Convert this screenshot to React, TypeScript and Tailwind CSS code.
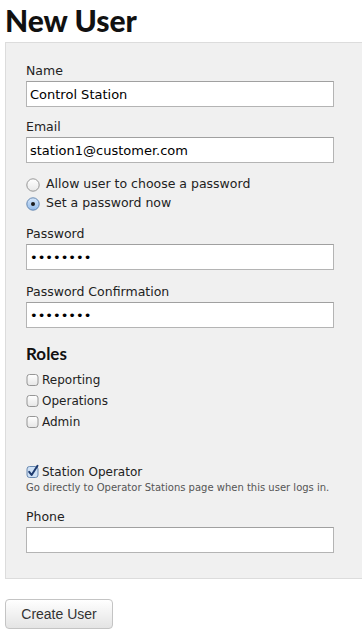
import React from 'react';

const body = { fontFamily: '"DejaVu Sans", sans-serif' };

const Field = ({ label, value, type = 'text', className = '' }: { label: string; value: string; type?: string; className?: string }) => (
  <div className={className}>
    <label className="block text-[12.5px] leading-4 text-[#222]">{label}</label>
    <input
      type={type}
      readOnly
      value={value}
      className="mt-[2px] block h-[26px] w-[308px] border border-[#b4b4b4] border-t-[#a0a0a0] bg-white px-[3px] text-[13px] text-black outline-none"
    />
  </div>
);

const Radio = ({ checked }: { checked?: boolean }) => (
  <svg width="14" height="14" viewBox="0 0 14 14" className="shrink-0">
    <defs>
      <linearGradient id={checked ? 'rOn' : 'rOff'} x1="0" y1="0" x2="0" y2="1">
        <stop offset="0" stopColor={checked ? '#d8e8fa' : '#ffffff'} />
        <stop offset="1" stopColor={checked ? '#8fb8e8' : '#e8e8e8'} />
      </linearGradient>
    </defs>
    <circle cx="7" cy="7" r="6.2" fill={`url(#${checked ? 'rOn' : 'rOff'})`} stroke={checked ? '#5a7eaa' : '#8c8c8c'} strokeWidth="0.9" />
    {checked && <circle cx="7" cy="7" r="2" fill="#1a1a1a" />}
  </svg>
);

const Check = ({ checked }: { checked?: boolean }) => (
  <svg width="13" height="13" viewBox="0 0 13 13" className="shrink-0 overflow-visible">
    <defs>
      <linearGradient id="cb" x1="0" y1="0" x2="0" y2="1">
        <stop offset="0" stopColor="#ffffff" />
        <stop offset="1" stopColor="#e6e6e6" />
      </linearGradient>
    </defs>
    <rect x="1" y="1.5" width="11" height="11" rx="2.5" fill={checked ? '#cfe1f5' : 'url(#cb)'} stroke={checked ? '#5b7ea8' : '#8a8a8a'} strokeWidth="0.9" />
    {checked && <path d="M3.2 6.8 L5.6 10 L11.5 0.8" fill="none" stroke="#1d3a6e" strokeWidth="2" strokeLinecap="round" strokeLinejoin="round" />}
  </svg>
);

export default function App() {
  return (
    <div className="min-h-[638px] bg-white pl-[5px]" style={body}>
      <h1 className="text-[30px] font-black leading-10 text-[#111]" style={{ fontFamily: 'Lato, sans-serif' }}>
        New User
      </h1>
      <div className="mt-[2px] border border-r-0 border-[#dcdcdc] bg-[#f0f0f0] px-5 pb-[25px] pt-5">
        <Field label="Name" value="Control Station" />
        <Field label="Email" value="station1@customer.com" className="mt-3" />

        <div className="mt-3 text-[12.5px] text-[#222]">
          <div className="flex h-[19px] items-center gap-[6px]">
            <Radio />
            <span>Allow user to choose a password</span>
          </div>
          <div className="flex h-[19px] items-center gap-[6px]">
            <Radio checked />
            <span>Set a password now</span>
          </div>
        </div>

        <Field label="Password" value="password" type="password" className="mt-[13px]" />
        <Field label="Password Confirmation" value="password" type="password" className="mt-[14px]" />

        <h2 className="mt-4 text-[17px] font-bold leading-5 text-[#111]" style={{ fontFamily: 'Lato, sans-serif' }}>
          Roles
        </h2>
        <div className="mt-[5px] text-[12px] text-[#222]">
          {['Reporting', 'Operations', 'Admin'].map((r) => (
            <div key={r} className="flex h-[21px] items-center gap-[3px]">
              <Check />
              <span>{r}</span>
            </div>
          ))}
        </div>

        <div className="mt-[30px] flex h-[19px] items-center gap-[3px] text-[12px] text-[#222]">
          <Check checked />
          <span>Station Operator</span>
        </div>
        <p className="text-[10px] leading-[14px] text-[#555]">Go directly to Operator Stations page when this user logs in.</p>

        <Field label="Phone" value="" className="mt-[14px]" />
      </div>

      <button
        className="mt-5 h-[30px] w-[108px] rounded-[4px] border border-[#c4c4c4] bg-gradient-to-b from-white to-[#e4e4e4] text-[14px] text-[#333]"
        style={{ fontFamily: '"Liberation Sans", Arial, sans-serif' }}
      >
        Create User
      </button>
    </div>
  );
}
